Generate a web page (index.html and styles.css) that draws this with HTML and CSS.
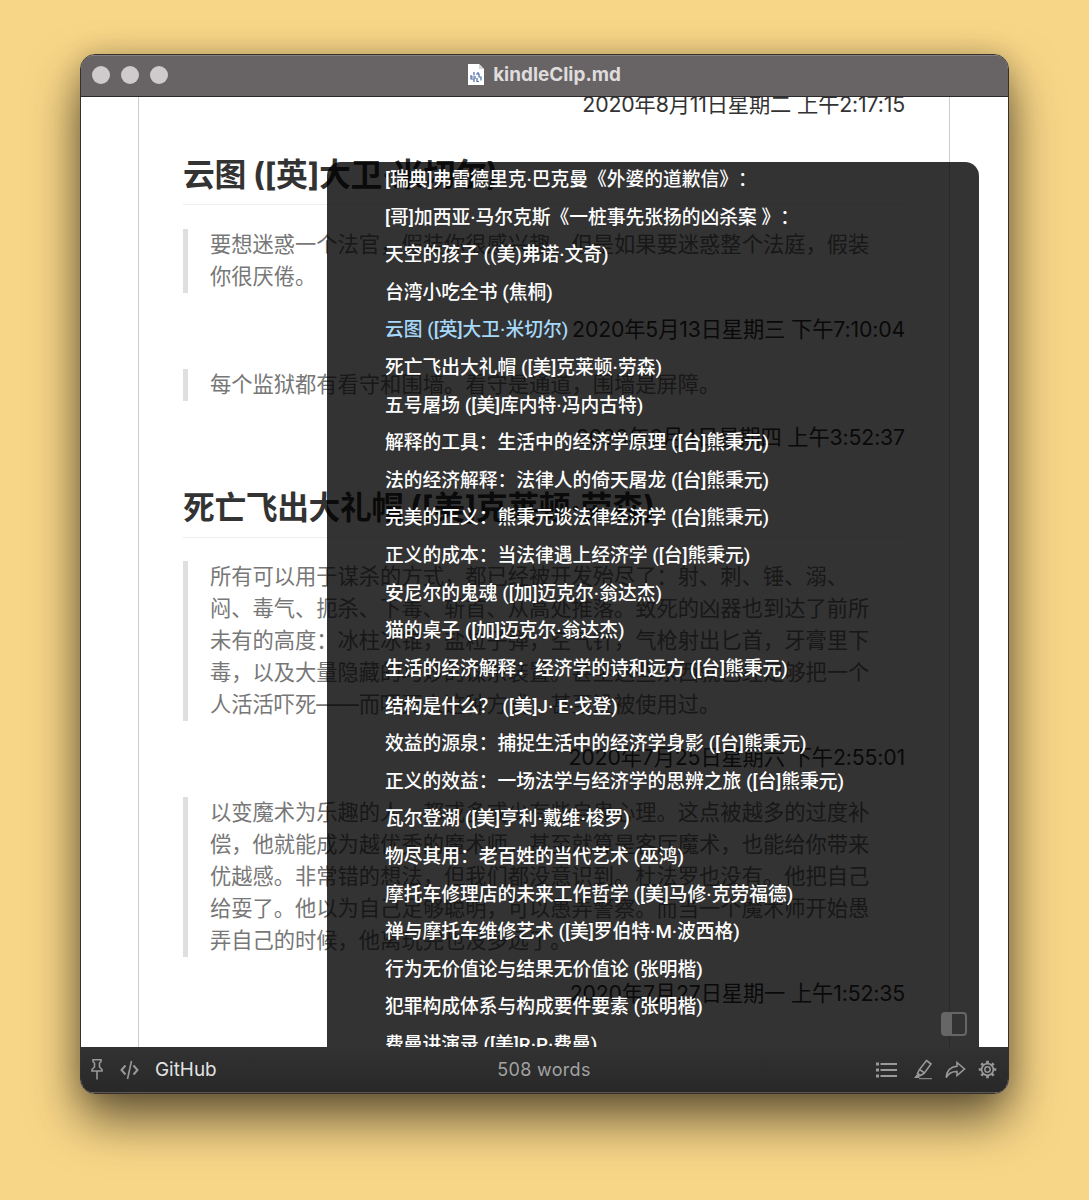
FILE: index.html
```html
<!DOCTYPE html>
<html lang="zh-CN">
<head>
    <meta charset="UTF-8">
    <meta name="viewport" content="width=device-width, initial-scale=1.0">
    <title>kindleClip.md</title>
    <link rel="stylesheet" href="styles.css">
</head>
<body>
    <div class="window">
        <header class="titlebar">
            <div class="lights">
                <span></span>
                <span></span>
                <span></span>
            </div>
            <div class="title">
                <svg class="fileIcon" viewBox="0 0 16 21" width="16" height="21">
                    <path d="M0 0h11l5 5v16H0z" fill="#fff"/>
                    <path d="M11 0v5h5z" fill="#d5d5dc"/>
                    <path d="M6 8v3.500M3 11v4h3v3M3 13h3M8 10h3v3h2v3.500M10 8v2M9 14v3.500h2M7 12v3" fill="none" stroke="#4c6ba8" stroke-width="1.200"/>
                </svg>
                <span>kindleClip.md</span>
            </div>
        </header>

        <main class="content">
            <article class="paper">
                <p class="date first">2020年8月11日星期二 上午2:17:15</p>

                <h2>云图 ([英]大卫·米切尔)</h2>
                <blockquote>要想迷惑一个法官，假装你很感兴趣。但是如果要迷惑整个法庭，假装<br>你很厌倦。</blockquote>
                <p class="date">2020年5月13日星期三 下午7:10:04</p>
                <blockquote>每个监狱都有看守和围墙。看守是通道，围墙是屏障。</blockquote>
                <p class="date">2020年6月4日星期四 上午3:52:37</p>

                <h2>死亡飞出大礼帽 ([美]克莱顿·劳森)</h2>
                <blockquote>所有可以用于谋杀的方式，都已经被开发殆尽了：射、刺、锤、溺、<br>闷、毒气、扼杀、下毒、斩首、从高处推落。致死的凶器也到达了前所<br>未有的高度：冰柱冰锥，盐粒子弹，空气针，气枪射出匕首，牙膏里下<br>毒，以及大量隐藏的巧妙的谋杀装置。甚至这些东西就已经足够把一个<br>人活活吓死——而吓死人这种方式，甚至没被使用过。</blockquote>
                <p class="date">2020年7月25日星期六 下午2:55:01</p>
                <blockquote>以变魔术为乐趣的人，都或多或少有些自卑心理。这点被越多的过度补<br>偿，他就能成为越优秀的魔术师，甚至就算是客厅魔术，也能给你带来<br>优越感。非常错的想法，但我们都没意识到。杜法罗也没有。他把自己<br>给耍了。他以为自己足够聪明，可以愚弄警察。而当一个魔术师开始愚<br>弄自己的时候，他离玩完也没多远了。</blockquote>
                <p class="date">2020年7月27日星期一 上午1:52:35</p>
            </article>

            <nav class="toc">
                <ul>
                    <li>[瑞典]弗雷德里克·巴克曼《外婆的道歉信》：</li>
                    <li>[哥]加西亚·马尔克斯《一桩事先张扬的凶杀案 》：</li>
                    <li>天空的孩子 ((美)弗诺·文奇)</li>
                    <li>台湾小吃全书 (焦桐)</li>
                    <li class="active">云图 ([英]大卫·米切尔)</li>
                    <li>死亡飞出大礼帽 ([美]克莱顿·劳森)</li>
                    <li>五号屠场 ([美]库内特·冯内古特)</li>
                    <li>解释的工具：生活中的经济学原理 ([台]熊秉元)</li>
                    <li>法的经济解释：法律人的倚天屠龙 ([台]熊秉元)</li>
                    <li>完美的正义：熊秉元谈法律经济学 ([台]熊秉元)</li>
                    <li>正义的成本：当法律遇上经济学 ([台]熊秉元)</li>
                    <li>安尼尔的鬼魂 ([加]迈克尔·翁达杰)</li>
                    <li>猫的桌子 ([加]迈克尔·翁达杰)</li>
                    <li>生活的经济解释：经济学的诗和远方 ([台]熊秉元)</li>
                    <li>结构是什么？ ([美]J· E·戈登)</li>
                    <li>效益的源泉：捕捉生活中的经济学身影 ([台]熊秉元)</li>
                    <li>正义的效益：一场法学与经济学的思辨之旅 ([台]熊秉元)</li>
                    <li>瓦尔登湖 ([美]亨利·戴维·梭罗)</li>
                    <li>物尽其用：老百姓的当代艺术 (巫鸿)</li>
                    <li>摩托车修理店的未来工作哲学 ([美]马修·克劳福德)</li>
                    <li>禅与摩托车维修艺术 ([美]罗伯特·M·波西格)</li>
                    <li>行为无价值论与结果无价值论 (张明楷)</li>
                    <li>犯罪构成体系与构成要件要素 (张明楷)</li>
                    <li>费曼讲演录 ([美]R·P·费曼)</li>
                </ul>
                <svg class="sidebarIcon" viewBox="0 0 26 24" width="26" height="24">
                    <rect x="1" y="1" width="24" height="22" rx="3" fill="none" stroke="#666" stroke-width="2"/>
                    <path d="M2 2h9v20H2z" fill="#666"/>
                </svg>
            </nav>
        </main>

        <footer class="statusbar">
            <div class="left">
                <svg viewBox="0 0 12 21" width="12" height="21">
                    <path d="M2 .700h8v2L8.500 4v4l2.500 2.500V12H1v-1.500L3.500 8V4L2 2.700zM6 12v8.500"/>
                </svg>
                <svg class="code" viewBox="0 0 19 20" width="19" height="20">
                    <path d="M5.500 5.500L1.500 10l4 4.500M13.500 5.500l4 4.500-4 4.500" stroke-width="2"/>
                    <path d="M11.500 1l-4 18"/>
                </svg>
                <span>GitHub</span>
            </div>
            <div class="words">508 words</div>
            <div class="right">
                <svg viewBox="0 0 22 16" width="22" height="16">
                    <path d="M0 2h3M0 8h3M0 14h3" stroke-width="2.800"/>
                    <path d="M4.500 2H21M4.500 8H21M4.500 14H21" stroke-width="2"/>
                </svg>
                <svg viewBox="0 0 20 21" width="20" height="21">
                    <path d="M13.500 1.500l4.500 3.500-6.500 9-5-3.500zM6.500 10.500l-2 4 3 2 4-2.500"/>
                    <path d="M4.200 15l2.800 2-1 2H1z" fill="#999" stroke="none"/>
                    <path d="M6 19.700h13" stroke-width="1"/>
                </svg>
                <svg viewBox="0 0 21 18" width="21" height="18">
                    <path d="M12 1.500l7.500 6.500-7.500 6.500v-4C7 10.300 3.800 12 1.200 16.500 1.800 9.500 5.500 5.800 12 5.300z"/>
                </svg>
                <svg viewBox="0 0 20 20" width="19" height="19">
                    <circle cx="10" cy="10" r="6.200" stroke-width="1.800"/>
                    <circle cx="10" cy="10" r="2.800"/>
                    <path d="M10 .800v3M10 16.200v3M.800 10h3M16.200 10h3M3.500 3.500l2.100 2.100M14.400 14.400l2.100 2.100M3.500 16.500l2.100-2.100M14.400 5.600l2.100-2.100" stroke-width="2.800"/>
                </svg>
            </div>
        </footer>
    </div>
</body>
</html>
```

FILE: styles.css
```css
*{
    margin: 0;
    padding: 0;
    box-sizing: border-box;
}
body{
    height: 1200px;
    padding: 54px 80px 0;
    background-color: #f8d688;
    font-family: Inter, "Noto Sans CJK SC", sans-serif;
    overflow: hidden;
}
.window{
    display: flex;
    flex-direction: column;
    width: 929px;
    height: 1040px;
    border: 1px solid #35302c;
    border-radius: 15px;
    overflow: hidden;
    background-color: #fff;
    box-shadow: 0 25px 50px rgba(0,0,0,.6), 0 0 26px rgba(0,0,0,.17);
}

/* title bar */
.titlebar{
    display: grid;
    grid-template-columns: 1fr auto 1fr;
    align-items: center;
    height: 42px;
    padding: 0 11px 3px;
    background-color: #686364;
    border-top: 1px solid #858081;
    border-bottom: 1px solid #2c292a;
    flex-shrink: 0;
}
.lights{
    display: flex;
    gap: 11px;
}
.lights span{
    width: 18px;
    height: 18px;
    border-radius: 50%;
    background-color: #cfcbcc;
}
.title{
    display: flex;
    align-items: center;
    gap: 9px;
    color: #dfdcdd;
    font-size: 18.9px;
    font-weight: 700;
}

/* document */
.content{
    position: relative;
    height: 950px;
    overflow: hidden;
    flex-shrink: 0;
}
.paper{
    display: flow-root;
    width: 812px;
    height: 950px;
    margin-left: 57px;
    padding: 0 44px;
    border-left: 1px solid #ccc;
    border-right: 1px solid #ccc;
    color: #333;
    font-size: 21.28px;
    line-height: 31.9px;
    white-space: nowrap;
}
.date{
    margin-top: 21px;
    text-align: right;
    letter-spacing: -.15px;
}
.date.first{
    margin-top: -8px;
}
h2{
    height: 52px;
    margin-top: 32.5px;
    border-bottom: 1px solid #eee;
    font-size: 31.8px;
    line-height: 44px;
    letter-spacing: -.4px;
}
blockquote{
    margin-top: 23.3px;
    padding-left: 22px;
    border-left: 5px solid #dfdfdf;
    color: #777;
}

/* outline panel */
.toc{
    position: absolute;
    left: 246px;
    top: 65px;
    width: 652px;
    height: 885px;
    padding-left: 58px;
    border-radius: 14px 14px 0 0;
    background-color: rgba(0,0,0,.8);
    overflow: hidden;
}
.toc ul{
    list-style: none;
}
.toc li{
    height: 37.62px;
    color: #fff;
    font-family: Roboto, "Noto Sans CJK SC", sans-serif;
    font-size: 18.75px;
    font-weight: 500;
    line-height: 37px;
    text-spacing-trim: space-all;
    white-space: nowrap;
}
.toc .active{
    color: #a6d8fa;
}
.sidebarIcon{
    position: absolute;
    right: 12px;
    bottom: 11px;
}

/* status bar */
.statusbar{
    display: grid;
    grid-template-columns: 1fr auto 1fr;
    align-items: center;
    height: 46px;
    padding: 0 11px 0 10px;
    background: linear-gradient(#323232, #282829);
    border-bottom: 1px solid #5a5550;
    color: #e2e2e2;
    font-size: 18.9px;
}
.statusbar svg{
    fill: none;
    stroke: #999;
    stroke-width: 1.6;
}
.left{
    display: flex;
    align-items: center;
}
.left .code{
    margin: 0 16px 0 17px;
}
.words{
    color: #a2a2a2;
    font-size: 18px;
    letter-spacing: .3px;
}
.right{
    display: flex;
    align-items: center;
    justify-content: flex-end;
    gap: 12px;
}
.right svg:first-child{
    margin-right: 3px;
}
```
